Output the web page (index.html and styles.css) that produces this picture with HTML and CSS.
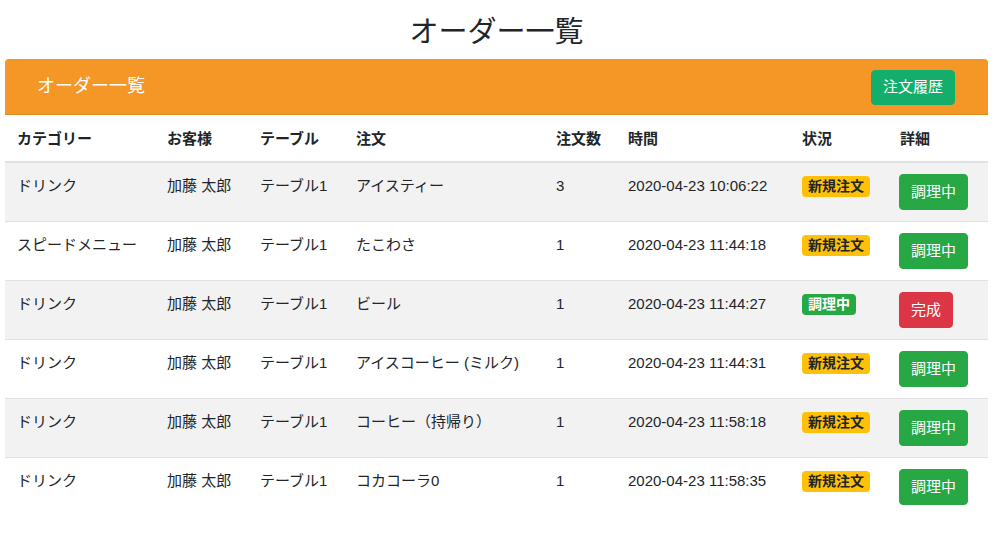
FILE: index.html
```html
<!DOCTYPE html>
<html lang="ja">
<head>
<meta charset="utf-8">
<title>オーダー一覧</title>
<link rel="stylesheet" href="styles.css">
</head>
<body>
<div class="page">
  <h1 class="title">オーダー一覧</h1>
  <div class="card-header">
    <span class="card-title">オーダー一覧</span>
    <button class="btn btn-history">注文履歴</button>
  </div>
  <table class="orders">
    <colgroup>
      <col class="c1"><col class="c2"><col class="c3"><col class="c4"><col class="c5"><col class="c6"><col class="c7"><col class="c8">
    </colgroup>
    <thead>
      <tr><th>カテゴリー</th><th>お客様</th><th>テーブル</th><th>注文</th><th>注文数</th><th>時間</th><th>状況</th><th>詳細</th></tr>
    </thead>
    <tbody>
      <tr><td>ドリンク</td><td>加藤 太郎</td><td>テーブル1</td><td>アイスティー</td><td>3</td><td>2020-04-23 10:06:22</td><td><span class="badge badge-new">新規注文</span></td><td><button class="btn btn-cook">調理中</button></td></tr>
      <tr><td>スピードメニュー</td><td>加藤 太郎</td><td>テーブル1</td><td>たこわさ</td><td>1</td><td>2020-04-23 11:44:18</td><td><span class="badge badge-new">新規注文</span></td><td><button class="btn btn-cook">調理中</button></td></tr>
      <tr><td>ドリンク</td><td>加藤 太郎</td><td>テーブル1</td><td>ビール</td><td>1</td><td>2020-04-23 11:44:27</td><td><span class="badge badge-cook">調理中</span></td><td><button class="btn btn-done">完成</button></td></tr>
      <tr><td>ドリンク</td><td>加藤 太郎</td><td>テーブル1</td><td>アイスコーヒー (ミルク)</td><td>1</td><td>2020-04-23 11:44:31</td><td><span class="badge badge-new">新規注文</span></td><td><button class="btn btn-cook">調理中</button></td></tr>
      <tr><td>ドリンク</td><td>加藤 太郎</td><td>テーブル1</td><td>コーヒー（持帰り）</td><td>1</td><td>2020-04-23 11:58:18</td><td><span class="badge badge-new">新規注文</span></td><td><button class="btn btn-cook">調理中</button></td></tr>
      <tr><td>ドリンク</td><td>加藤 太郎</td><td>テーブル1</td><td>コカコーラ0</td><td>1</td><td>2020-04-23 11:58:35</td><td><span class="badge badge-new">新規注文</span></td><td><button class="btn btn-cook">調理中</button></td></tr>
    </tbody>
  </table>
</div>
</body>
</html>
```

FILE: styles.css
```css
* { box-sizing: border-box; }
html, body { margin: 0; padding: 0; background: #fff; }
body {
  font-family: "Liberation Sans", Arial, "Noto Sans CJK JP", sans-serif;
  font-size: 15px;
  color: #212529;
}
.page { margin: 0 12px 0 5px; }
.title {
  margin: 0;
  height: 59px;
  padding-top: 13px;
  font-size: 29px;
  font-weight: 400;
  line-height: 38px;
  text-align: center;
  color: #212529;
}
.card-header {
  display: flex;
  align-items: center;
  justify-content: space-between;
  height: 56px;
  padding: 0 33px;
  background: #f59726;
  border-radius: 4px 4px 0 0;
  border-bottom: 1px solid #e08a22;
}
.card-title {
  color: #fff;
  font-size: 18px;
  margin-top: -6px;
  margin-left: -1px;
}
.btn {
  display: inline-block;
  font-family: inherit;
  font-size: 15px;
  line-height: 22px;
  padding: 6px 11px;
  border: 1px solid transparent;
  border-radius: 4px;
  color: #fff;
  cursor: pointer;
}
.btn-history { background: #14ae6c; border-color: #14ae6c; height: 35px; padding: 5px 11px; margin-top: 1px; }
.btn-cook { background: #28a745; border-color: #28a745; }
.btn-done { background: #dc3545; border-color: #dc3545; }
.orders {
  width: 100%;
  border-collapse: collapse;
  table-layout: fixed;
}
.c1 { width: 150px; }
.c2 { width: 93px; }
.c3 { width: 96px; }
.c4 { width: 200px; }
.c5 { width: 72px; }
.c6 { width: 174px; }
.c7 { width: 98px; }
.c8 { width: 100px; }
.orders th {
  text-align: left;
  font-weight: 700;
  padding: 11px 12px 12px;
  height: 47px;
  border-bottom: 2px solid #dee2e6;
  white-space: nowrap;
}
.orders td {
  vertical-align: top;
  padding: 11px 12px;
  height: 59px;
  line-height: 24px;
  border-top: 1px solid #dee2e6;
  white-space: nowrap;
}
.orders thead + tbody tr:first-child td { border-top: 0; }
.orders tbody tr:nth-child(odd) { background: #f2f2f2; }
.badge {
  display: inline-block;
  font-size: 14px;
  font-weight: 700;
  line-height: 15px;
  padding: 3px 6px;
  border-radius: 4px;
  vertical-align: top;
  margin-top: 2px;
}
.badge-new { background: #ffc107; color: #212529; }
.badge-cook { background: #28a745; color: #fff; }
.orders td:last-child { padding-left: 11px; }
```
